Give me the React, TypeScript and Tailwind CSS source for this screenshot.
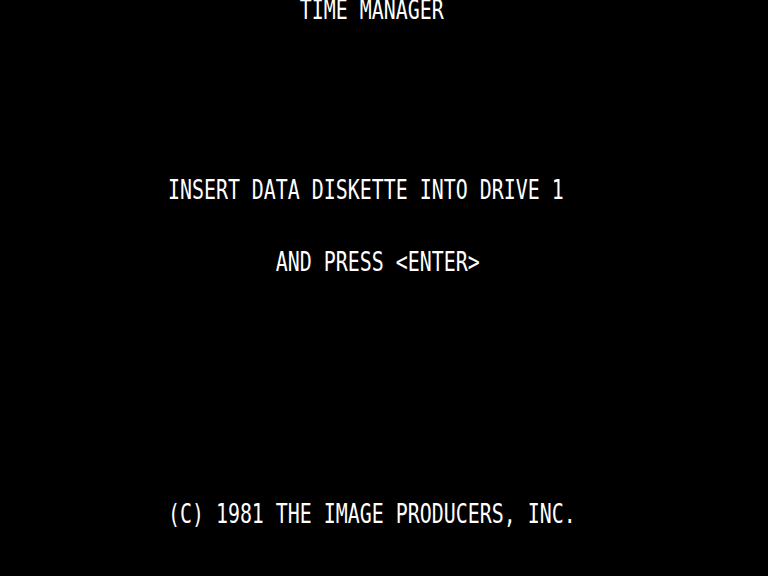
import React from 'react'

// 64 x 16 character screen, each cell 12px x 36px
const SCREEN: string[] = [
  '                         TIME MANAGER',
  '',
  '',
  '',
  '',
  '              INSERT DATA DISKETTE INTO DRIVE 1',
  '',
  '                       AND PRESS <ENTER>',
  '',
  '',
  '',
  '',
  '',
  '',
  '              (C) 1981 THE IMAGE PRODUCERS, INC.',
  '',
]

export default function App() {
  return (
    <div className="w-full h-[576px] bg-black overflow-hidden text-white">
      <div className="flex flex-col w-[768px]">
        {SCREEN.map((line, i) => (
          <div key={i} className="h-[36px] overflow-visible">
            <div
              className="whitespace-pre text-[19.93px] leading-[16px] origin-top scale-y-[1.37]"
              style={{ fontFamily: '"DejaVu Sans Mono", "Liberation Mono", monospace' }}
            >
              {line || ' '}
            </div>
          </div>
        ))}
      </div>
    </div>
  )
}
